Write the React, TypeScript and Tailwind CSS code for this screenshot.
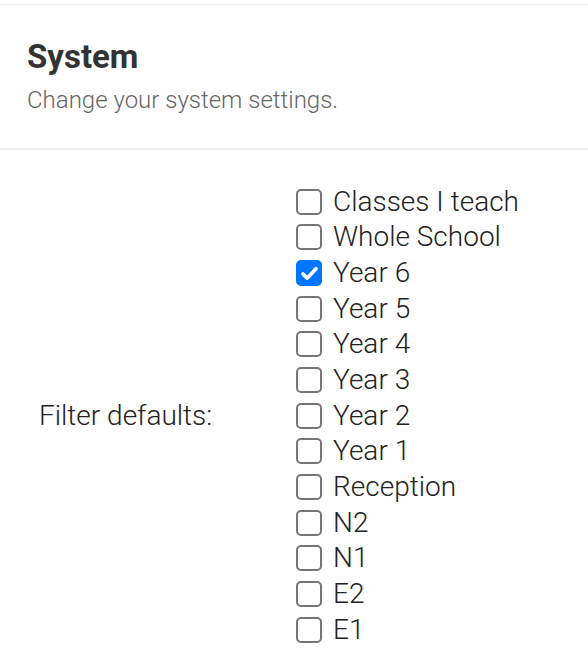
const options = [
  { label: 'Classes I teach', checked: false },
  { label: 'Whole School', checked: false },
  { label: 'Year 6', checked: true },
  { label: 'Year 5', checked: false },
  { label: 'Year 4', checked: false },
  { label: 'Year 3', checked: false },
  { label: 'Year 2', checked: false },
  { label: 'Year 1', checked: false },
  { label: 'Reception', checked: false },
  { label: 'N2', checked: false },
  { label: 'N1', checked: false },
  { label: 'E2', checked: false },
  { label: 'E1', checked: false },
];

function Box({ checked }: { checked: boolean }) {
  if (checked) {
    return (
      <span className="flex h-[26px] w-[26px] shrink-0 items-center justify-center rounded-[5px] bg-[#0075ff]">
        <svg viewBox="0 0 24 24" className="h-[21px] w-[21px]" fill="none" stroke="white" strokeWidth="4.2" strokeLinecap="round" strokeLinejoin="round">
          <path d="M4.5 12.5l4.8 4.8L19.5 6.5" />
        </svg>
      </span>
    );
  }
  return <span className="h-[26px] w-[26px] shrink-0 rounded-[5px] border-2 border-[#767676] bg-white" />;
}

export default function App() {
  return (
    <div className="min-h-screen bg-white font-['Roboto',sans-serif]">
      <div className="mt-[4px] border-t border-[#eeeeee]" />
      <div className="border-b-2 border-[#eeeeee] px-[27px] pt-[32px] pb-[34px]">
        <h1 className="text-[33px] leading-[40px] font-bold text-[#333333]">System</h1>
        <p className="mt-[9px] text-[24px] leading-[28px] font-light text-[#666666]">Change your system settings.</p>
      </div>
      <div className="grid grid-cols-2 pt-[34px]">
        <div className="flex items-center pl-[39px] text-[28px] font-light text-[#222222]">Filter defaults:</div>
        <div className="flex flex-col pl-[2px]">
          {options.map((o) => (
            <label key={o.label} className="flex h-[35.67px] items-center gap-[11px] text-[28px] font-light text-[#222222]">
              <Box checked={o.checked} />
              <span>{o.label}</span>
            </label>
          ))}
        </div>
      </div>
    </div>
  );
}
